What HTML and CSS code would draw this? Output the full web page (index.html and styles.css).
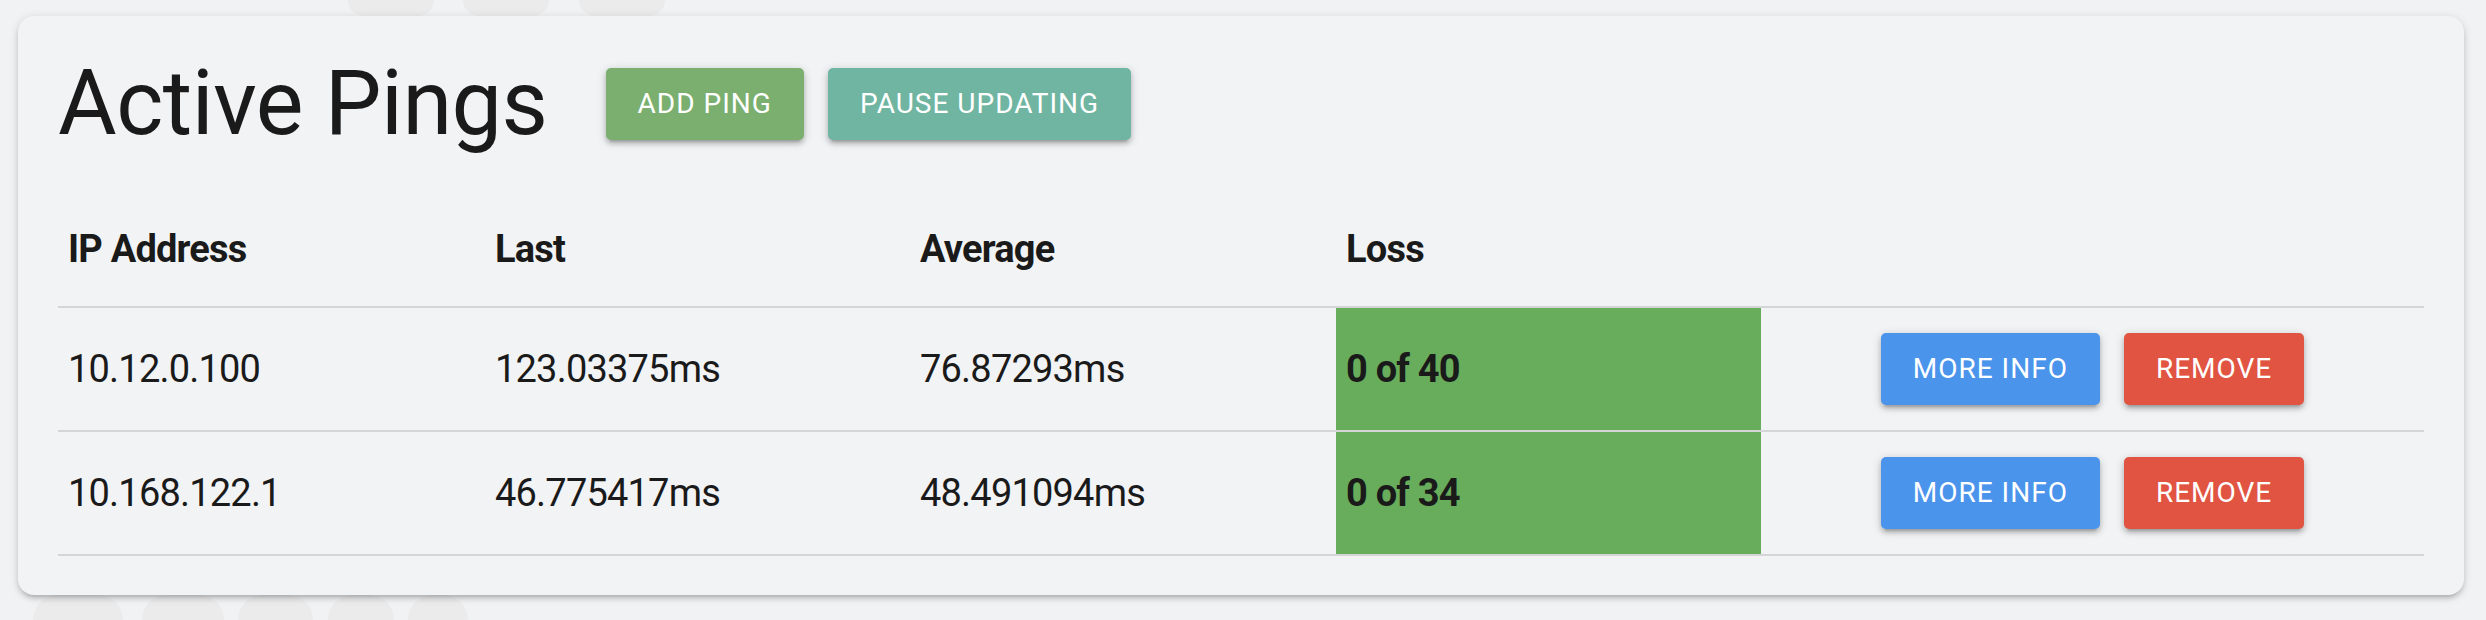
FILE: index.html
```html
<!DOCTYPE html>
<html lang="en">
<head>
<meta charset="utf-8">
<title>Active Pings</title>
<link rel="stylesheet" href="styles.css">
</head>
<body>
<div class="backdrop" aria-hidden="true">
  <span class="blob blob-top" style="left:348px;width:86px"></span>
  <span class="blob blob-top" style="left:463px;width:86px"></span>
  <span class="blob blob-top" style="left:579px;width:86px"></span>
  <span class="blob blob-bottom" style="left:33px;width:90px"></span>
  <span class="blob blob-bottom" style="left:142px;width:82px"></span>
  <span class="blob blob-bottom" style="left:238px;width:75px"></span>
  <span class="blob blob-bottom" style="left:328px;width:66px"></span>
  <span class="blob blob-bottom" style="left:408px;width:60px"></span>
</div>
<div class="card">
  <div class="top">
    <h1 class="title">Active Pings</h1>
    <div class="actions">
      <button class="btn btn-green">Add Ping</button>
      <button class="btn btn-teal">Pause Updating</button>
    </div>
  </div>
  <table class="pings">
    <colgroup>
      <col class="c-ip"><col class="c-last"><col class="c-avg"><col class="c-loss"><col class="c-act">
    </colgroup>
    <thead>
      <tr><th>IP Address</th><th>Last</th><th>Average</th><th>Loss</th><th></th></tr>
    </thead>
    <tbody>
      <tr>
        <td>10.12.0.100</td>
        <td>123.03375ms</td>
        <td>76.87293ms</td>
        <td class="loss">0 of 40</td>
        <td><div class="row-actions"><button class="btn btn-blue">More Info</button><button class="btn btn-red">Remove</button></div></td>
      </tr>
      <tr>
        <td>10.168.122.1</td>
        <td>46.775417ms</td>
        <td>48.491094ms</td>
        <td class="loss">0 of 34</td>
        <td><div class="row-actions"><button class="btn btn-blue">More Info</button><button class="btn btn-red">Remove</button></div></td>
      </tr>
    </tbody>
  </table>
</div>
</body>
</html>
```
FILE: styles.css
```css
html, body {
  margin: 0;
  padding: 0;
}
body {
  background: #f1f2f4;
  font-family: Roboto, "Liberation Sans", sans-serif;
  color: #1a1a1a;
  height: 620px;
  overflow: hidden;
  position: relative;
}
.backdrop {
  position: absolute;
  inset: 0;
  z-index: 0;
  overflow: hidden;
}
.blob {
  position: absolute;
  background: #ebebec;
}
.blob-top {
  top: 0;
  height: 16px;
  border-radius: 0 0 40px 40px;
}
.blob-bottom {
  bottom: 0;
  height: 25px;
  border-radius: 40px 40px 0 0;
}
.card {
  position: relative;
  z-index: 1;
  margin: 16px 22px 0 18px;
  padding: 43px 40px 39px 40px;
  background: #f2f3f5;
  border-radius: 16px;
  box-shadow: 0 4px 4px rgba(0,0,0,0.10), 0 6px 2px -4px rgba(0,0,0,0.08), 0 2px 10px rgba(0,0,0,0.14);
}
.top {
  display: flex;
  align-items: center;
  gap: 58px;
  height: 90px;
}
.title {
  margin: 0;
  font-size: 90px;
  line-height: 90px;
  font-weight: 400;
  letter-spacing: -0.5px;
  color: #1a1a1a;
}
.actions {
  display: flex;
  gap: 24px;
}
.btn {
  border: none;
  height: 72px;
  line-height: 72px;
  padding: 0 32px;
  border-radius: 5px;
  font-family: Roboto, "Liberation Sans", sans-serif;
  font-size: 28px;
  font-weight: 400;
  letter-spacing: 1px;
  text-transform: uppercase;
  color: #ffffff;
  box-shadow: 0 4px 4px rgba(0,0,0,0.14), 0 6px 2px -4px rgba(0,0,0,0.12), 0 2px 10px rgba(0,0,0,0.2);
  cursor: pointer;
}
.btn-green { background: #7aaf6f; }
.btn-teal { background: #6fb5a2; }
.btn-blue { background: #4a94eb; }
.btn-red { background: #e15442; }

.pings {
  margin-top: 43px;
  width: 100%;
  border-collapse: collapse;
  table-layout: fixed;
}
.c-ip { width: 427px; }
.c-last { width: 425px; }
.c-avg { width: 426px; }
.c-loss { width: 425px; }
.c-act { width: 663px; }
.pings tr {
  border-bottom: 2px solid #d4d5d7;
}
.pings th {
  text-align: left;
  font-size: 38px;
  font-weight: 700;
  line-height: 57px;
  padding: 28.5px 10px;
  letter-spacing: -0.8px;
}
.pings td {
  font-size: 38px;
  font-weight: 400;
  line-height: 72px;
  padding: 25px 10px;
  letter-spacing: -0.8px;
  white-space: nowrap;
}
.pings td.loss {
  background: #68ad5c;
  font-weight: 700;
}
.row-actions {
  display: flex;
  justify-content: center;
  gap: 24px;
}
```
